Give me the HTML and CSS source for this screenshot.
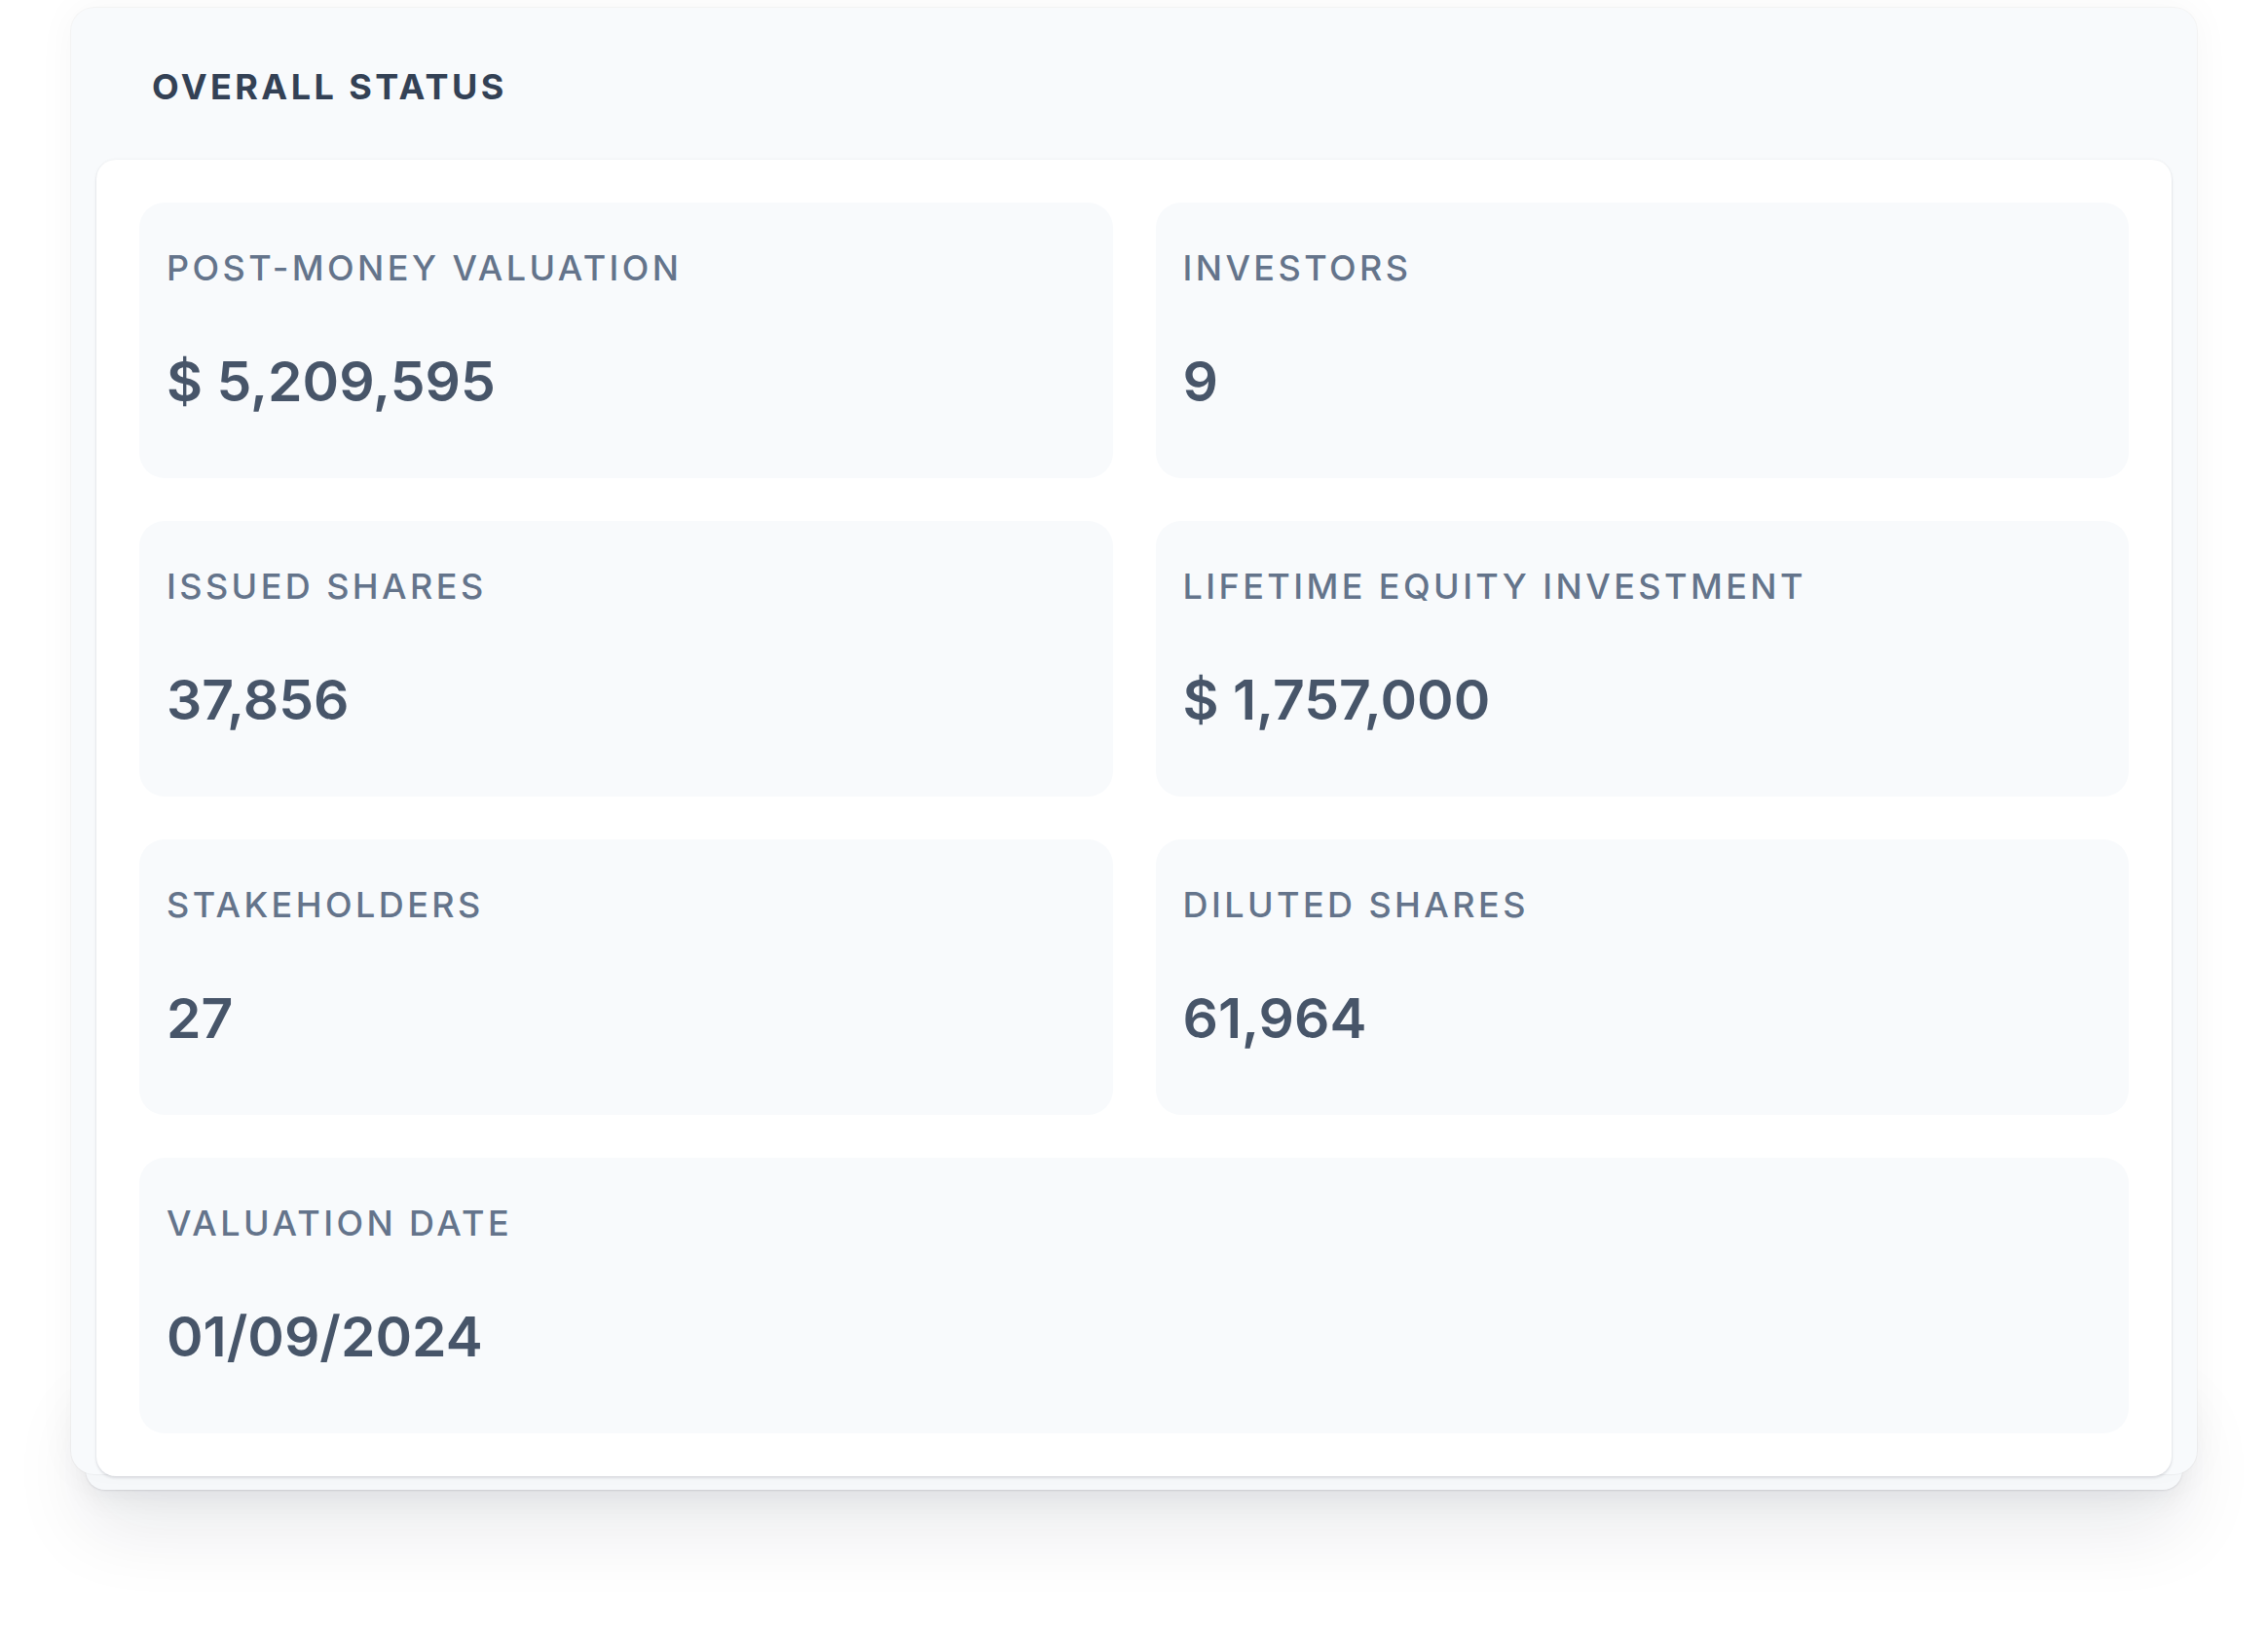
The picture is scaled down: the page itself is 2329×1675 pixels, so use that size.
FILE: index.html
```
<!DOCTYPE html>
<html lang="en">
<head>
<meta charset="utf-8">
<title>Overall Status</title>
<link rel="stylesheet" href="styles.css">
</head>
<body>
  <section class="status-card">
    <header class="status-header">
      <h2 class="status-title">OVERALL STATUS</h2>
    </header>
    <div class="status-body">
      <div class="stat-grid">
        <div class="stat">
          <div class="stat-label">POST-MONEY VALUATION</div>
          <div class="stat-value">$ 5,209,595</div>
        </div>
        <div class="stat">
          <div class="stat-label">INVESTORS</div>
          <div class="stat-value">9</div>
        </div>
        <div class="stat">
          <div class="stat-label">ISSUED SHARES</div>
          <div class="stat-value">37,856</div>
        </div>
        <div class="stat">
          <div class="stat-label">LIFETIME EQUITY INVESTMENT</div>
          <div class="stat-value">$ 1,757,000</div>
        </div>
        <div class="stat">
          <div class="stat-label">STAKEHOLDERS</div>
          <div class="stat-value">27</div>
        </div>
        <div class="stat">
          <div class="stat-label">DILUTED SHARES</div>
          <div class="stat-value">61,964</div>
        </div>
        <div class="stat stat-wide">
          <div class="stat-label">VALUATION DATE</div>
          <div class="stat-value">01/09/2024</div>
        </div>
      </div>
    </div>
  </section>
</body>
</html>
```
FILE: styles.css
```
html, body {
  margin: 0;
  padding: 0;
}

body {
  font-family: Inter, "Noto Sans", "Liberation Sans", sans-serif;
  padding: 8px 0 0 73px;
  min-height: 100vh;
  box-sizing: border-box;
  overflow: hidden;
}

.status-card {
  position: relative;
  width: 2183px;
  box-sizing: border-box;
  padding: 0 26px;
  background: #f8fafc;
  border-radius: 24px;
  box-shadow: 0 0 0 1px rgba(15, 23, 42, 0.035), 0 0 40px rgba(15, 23, 42, 0.04);
}

.status-card::before {
  content: "";
  position: absolute;
  left: 15px;
  right: 15px;
  bottom: -16px;
  height: 120px;
  background: #f8fafc;
  border-radius: 20px;
  z-index: -1;
  box-shadow: 0 1px 2px rgba(15, 23, 42, 0.10), 0 40px 80px rgba(15, 23, 42, 0.09), 0 10px 30px rgba(15, 23, 42, 0.05);
}

.status-header {
  padding: 54px 57px 46px;
}

.status-title {
  margin: 0;
  font-size: 36px;
  line-height: 54px;
  font-weight: 700;
  letter-spacing: 0.095em;
  color: #334155;
}

.status-body {
  position: relative;
  top: 2px;
  background: #ffffff;
  border-radius: 20px;
  padding: 44px;
  box-shadow: 0 0 3px rgba(15, 23, 42, 0.07), 0 2px 3px rgba(15, 23, 42, 0.10);
}

.stat-grid {
  display: grid;
  grid-template-columns: 1fr 1fr;
  gap: 44px;
}

.stat {
  background: #f8fafc;
  border-radius: 26px;
  padding: 40px 28px 64px;
}

.stat-wide {
  grid-column: 1 / span 2;
}

.stat-label {
  font-size: 36px;
  line-height: 54px;
  font-weight: 500;
  letter-spacing: 0.095em;
  color: #64748b;
}

.stat-value {
  margin-top: 55px;
  font-size: 57px;
  line-height: 70px;
  font-weight: 600;
  color: #475569;
}
```
